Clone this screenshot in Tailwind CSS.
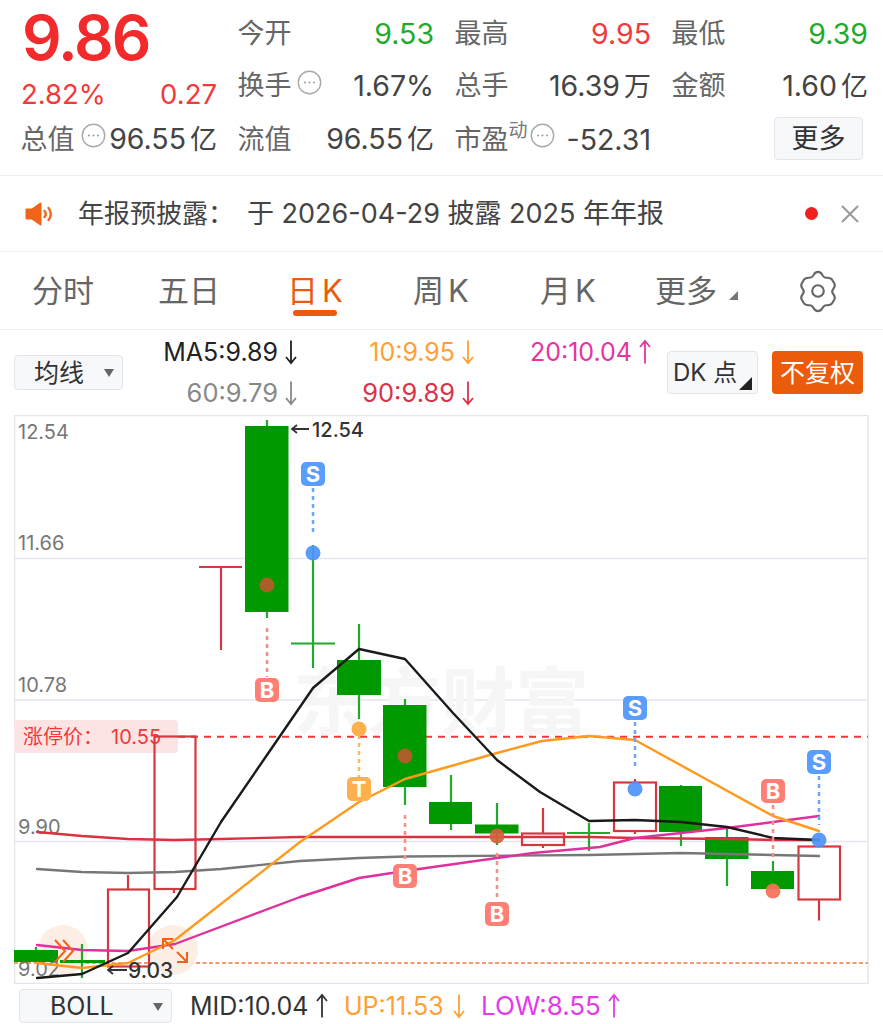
<!DOCTYPE html>
<html lang="zh">
<head>
<meta charset="utf-8">
<script src="https://cdn.jsdelivr.net/npm/@tailwindcss/browser@4"></script>
<title>K</title>
</head>
<body class="bg-white font-['Inter','Noto_Sans_CJK_SC',sans-serif] text-[#444]">
<div class="w-[883px] h-[1024px] overflow-hidden flex flex-col">

  <!-- quote header -->
  <section class="h-[176px] border-b border-[#eeeeee] pl-[21px] grid grid-cols-[196px_195px_195px_195px] gap-x-[22px] grid-rows-[60px_52px_55px] text-[28.5px] leading-[34px]">
    <div class="pt-[8px] pl-[1px] text-[62px] leading-[60px] font-semibold text-[#f32a2c] tracking-[-2px]">9.86</div>
    <div class="flex items-center justify-between pt-[7px]"><span class="text-[27px] -ml-[1.5px] text-[#666]">今开</span><span class="text-[#1faa2c]">9.53</span></div>
    <div class="flex items-center justify-between pt-[7px]"><span class="text-[27px] -ml-[1.5px] text-[#666]">最高</span><span class="text-[#f33a3c]">9.95</span></div>
    <div class="flex items-center justify-between pt-[7px]"><span class="text-[27px] -ml-[1.5px] text-[#666]">最低</span><span class="text-[#1faa2c]">9.39</span></div>

    <div class="flex items-center justify-between pl-[1px] pt-[16px] text-[27.5px] text-[#f3393b]"><span class="-ml-[1px]">2.82%</span><span>0.27</span></div>
    <div class="flex items-center"><span class="text-[27px] -ml-[1.5px] text-[#666]">换手</span>
      <svg class="ml-[5px] -mt-[8px] w-[25px] h-[25px]" viewBox="0 0 25 25"><circle cx="12.500" cy="12.500" r="11.200" fill="none" stroke="#aaa" stroke-width="1.400"/><circle cx="8" cy="12.500" r="1" fill="#999"/><circle cx="12.500" cy="12.500" r="1" fill="#999"/><circle cx="17" cy="12.500" r="1" fill="#999"/></svg>
      <span class="ml-auto">1.67%</span></div>
    <div class="flex items-center justify-between"><span class="text-[27px] -ml-[1.5px] text-[#666]">总手</span><span>16.39<span class="text-[27px] ml-[4px]">万</span></span></div>
    <div class="flex items-center justify-between"><span class="text-[27px] -ml-[1.5px] text-[#666]">金额</span><span>1.60<span class="text-[27px] ml-[4px]">亿</span></span></div>

    <div class="flex items-center pl-[1px]"><span class="text-[27px] -ml-[1.5px] text-[#666]">总值</span>
      <svg class="ml-[6px] -mt-[9px] w-[25px] h-[25px] shrink-0" viewBox="0 0 25 25"><circle cx="12.500" cy="12.500" r="11.200" fill="none" stroke="#aaa" stroke-width="1.400"/><circle cx="8" cy="12.500" r="1" fill="#999"/><circle cx="12.500" cy="12.500" r="1" fill="#999"/><circle cx="17" cy="12.500" r="1" fill="#999"/></svg>
      <span class="ml-auto">96.55<span class="text-[27px] ml-[4px]">亿</span></span></div>
    <div class="flex items-center justify-between"><span class="text-[27px] -ml-[1.5px] text-[#666]">流值</span><span>96.55<span class="text-[27px] ml-[4px]">亿</span></span></div>
    <div class="flex items-center"><span class="text-[27px] -ml-[1.5px] text-[#666]">市盈</span><span class="text-[19px] leading-[18px] text-[#777] -mt-[18px]">动</span>
      <svg class="ml-[2px] -mt-[9px] w-[25px] h-[25px] shrink-0" viewBox="0 0 25 25"><circle cx="12.500" cy="12.500" r="11.200" fill="none" stroke="#aaa" stroke-width="1.400"/><circle cx="8" cy="12.500" r="1" fill="#999"/><circle cx="12.500" cy="12.500" r="1" fill="#999"/><circle cx="17" cy="12.500" r="1" fill="#999"/></svg>
      <span class="ml-auto">-52.31</span></div>
    <div class="flex items-center justify-end pr-[5px] pb-[2px]"><span class="w-[89px] h-[43px] rounded-[4px] border border-[#e3e5ea] bg-[#f7f8fa] flex items-center justify-center text-[27px] text-[#333]">更多</span></div>
  </section>

  <!-- notice -->
  <section class="h-[76px] border-b border-[#eeeeee] flex items-center pl-[25px] text-[26px] text-[#444]">
    <svg class="w-[28px] h-[26px] shrink-0" viewBox="0 0 28 26"><path d="M1.500 8.500h5.500L15.500 2.500v21L7 17.500H1.500z" fill="#f0641a" stroke="#f0641a" stroke-width="2" stroke-linejoin="round"/><path d="M19.500 10a4.500 4.500 0 0 1 0 6M23.500 7a9 9 0 0 1 0 12" fill="none" stroke="#f0641a" stroke-width="2.400" stroke-linecap="round"/></svg>
    <span class="ml-[25px] mt-[2px] whitespace-nowrap">年报预披露：<span class="ml-[13px] text-[27px]">于 2026-04-29 披露 2025 年年报</span></span>
    <span class="ml-auto w-[13px] h-[13px] rounded-full bg-[#f21d1d]"></span>
    <svg class="ml-[22px] mr-[23px] w-[20px] h-[20px]" viewBox="0 0 20 20"><path d="M2 2l16 16M18 2L2 18" stroke="#999" stroke-width="2" fill="none"/></svg>
  </section>

  <!-- tabs -->
  <nav class="relative h-[78px] border-b border-[#eeeeee] flex items-center text-[31px] text-[#666] pt-[2px]">
    <span class="ml-[32px] w-[126px]">分时</span>
    <span class="w-[132px]">五日</span>
    <span class="relative w-[123px] -ml-[3px] mr-[3px] text-[#ea5b0c]">日<span class="ml-[4px]">K</span><span class="absolute left-[6px] top-[42px] w-[44px] h-[6px] rounded-full bg-[#ea5b0c]"></span></span>
    <span class="w-[127px]">周<span class="ml-[4px]">K</span></span>
    <span class="w-[115px]">月<span class="ml-[4px]">K</span></span>
    <span class="relative w-[141px]">更多<span class="absolute left-[74px] top-[23px] w-0 h-0 border-l-[9px] border-l-transparent border-b-[9px] border-b-[#777]"></span></span>
    <svg class="w-[44px] h-[44px] -mt-[2px]" viewBox="0 0 38 38"><path d="M19 2.500c1.800 0 3 1 4 3 .8 1.500 2 2.200 3.600 2.100 2.300-.1 3.800.3 4.700 1.900l1.800 3.100c.9 1.600.5 3-1 4.800-1.100 1.300-1.100 2.800 0 4.200 1.500 1.800 1.900 3.200 1 4.800l-1.800 3c-.9 1.600-2.400 2-4.700 1.900-1.600-.1-2.800.6-3.600 2.100-1 2-2.200 3-4 3s-3-1-4-3c-.8-1.500-2-2.200-3.600-2.100-2.300.1-3.800-.3-4.700-1.900l-1.800-3c-.9-1.600-.5-3 1-4.800 1.100-1.400 1.100-2.900 0-4.200-1.500-1.800-1.900-3.200-1-4.800l1.800-3.100c.9-1.600 2.400-2 4.700-1.900 1.600.1 2.800-.6 3.600-2.100 1-2 2.200-3 4-3z" fill="none" stroke="#666" stroke-width="1.800"/><circle cx="19" cy="19" r="5" fill="none" stroke="#666" stroke-width="1.800"/></svg>
  </nav>

  <!-- indicator row -->
  <section class="relative h-[85px] text-[25px] leading-[30px]">
    <span class="absolute left-[14px] top-[25px] w-[109px] h-[35px] rounded-[4px] border border-[#e3e5ea] bg-[#f7f8fa] flex items-center pl-[19px] text-[#333]">均线<span class="absolute right-[8px] top-[13px] w-0 h-0 border-x-[5px] border-x-transparent border-t-[8px] border-t-[#666]"></span></span>
    <div class="absolute left-[140px] top-[7px] w-[158px] flex items-center justify-end gap-[6px] whitespace-nowrap text-[#222]">MA5:9.89<svg class="w-[14px] h-[26px]" viewBox="0 0 14 26" fill="none" stroke="currentColor" stroke-width="1.800"><path d="M7 1.500V24M2 18l5 6 5-6"/></svg></div>
    <div class="absolute left-[317px] top-[7px] w-[158px] flex items-center justify-end gap-[6px] whitespace-nowrap text-[#ffa033]">10:9.95<svg class="w-[14px] h-[26px]" viewBox="0 0 14 26" fill="none" stroke="currentColor" stroke-width="1.800"><path d="M7 1.500V24M2 18l5 6 5-6"/></svg></div>
    <div class="absolute left-[494px] top-[7px] w-[158px] flex items-center justify-end gap-[6px] whitespace-nowrap text-[#e6349f]">20:10.04<svg class="w-[14px] h-[26px]" viewBox="0 0 14 26" fill="none" stroke="currentColor" stroke-width="1.800"><path d="M7 24.500V2M2 8l5-6 5 6"/></svg></div>
    <div class="absolute left-[140px] top-[48px] w-[158px] flex items-center justify-end gap-[6px] whitespace-nowrap text-[25.500px] text-[#888]">60:9.79<svg class="w-[14px] h-[26px]" viewBox="0 0 14 26" fill="none" stroke="currentColor" stroke-width="1.800"><path d="M7 1.500V24M2 18l5 6 5-6"/></svg></div>
    <div class="absolute left-[317px] top-[48px] w-[158px] flex items-center justify-end gap-[6px] whitespace-nowrap text-[25.500px] text-[#d9334a]">90:9.89<svg class="w-[14px] h-[26px]" viewBox="0 0 14 26" fill="none" stroke="currentColor" stroke-width="1.800"><path d="M7 1.500V24M2 18l5 6 5-6"/></svg></div>
    <span class="absolute left-[667px] top-[21px] w-[91px] h-[43px] rounded-[4px] border border-[#e3e5ea] bg-[#f7f8fa] flex items-center pl-[5px] text-[#333] text-[24px] whitespace-nowrap">DK 点<span class="absolute right-[5px] bottom-[3px] w-0 h-0 border-l-[13px] border-l-transparent border-b-[13px] border-b-[#222]"></span></span>
    <span class="absolute left-[772px] top-[21px] w-[91px] h-[43px] rounded-[4px] bg-[#ea5b0c] flex items-center justify-center text-white">不复权</span>
  </section>

  <!-- chart -->
  <div class="h-[569px] ml-[14px] w-[855px]">
    <svg class="block" width="855" height="569" viewBox="14 415 855 569" font-family="'Inter','Noto Sans CJK SC',sans-serif">
      <rect x="14.500" y="415.500" width="853.500" height="568" fill="#fff" stroke="#e4e6ee" stroke-width="1.500"/>
      <path d="M14 558.500H868M14 700H868M14 841.500H868" stroke="#e4e6f0" stroke-width="1.500"/>

      <text x="293" y="729" font-size="74" font-weight="700" fill="#f6f6f6" font-family="'Noto Sans CJK SC',sans-serif">东方财富</text>

      <rect x="14" y="720" width="164" height="33" rx="4" fill="#fde4e4"/>
      <text x="23" y="744" font-size="20" fill="#f0383a">涨停价：<tspan dx="8">10.55</tspan></text>
      <path d="M178 736.800H868" stroke="#f0383a" stroke-width="2" stroke-dasharray="7 6"/>
      <path d="M14 963H868" stroke="#f29a6a" stroke-width="2" stroke-dasharray="4 2.500"/>

      <circle cx="63" cy="950" r="25" fill="#fdeee5"/>
      <circle cx="173" cy="950" r="25" fill="#fdeee5"/>

      <g font-size="20" fill="#777">
        <text x="18" y="439">12.54</text>
        <text x="18" y="550">11.66</text>
        <text x="18" y="692">10.78</text>
        <text x="18" y="834">9.90</text>
        <text x="18" y="976">9.02</text>
      </g>

      <!-- green candles -->
      <g stroke="#22a82a" stroke-width="2.200" fill="none">
        <path d="M36 947v4M82 944v34M267 420v7M267 611v7M313 545v123M291 643.500h44M359 624v37M359 694v25M405 699v7M405 786v19M451 775v28M451 823v7M497 803v22M497 832v13M589 823v28M567 833h43M681 785v2M681 831v15M727 829v9M727 858v28M773 861v11M773 888v2"/>
      </g>
      <g fill="#009a00">
        <rect x="14" y="950" width="44" height="12"/>
        <rect x="60" y="960" width="45" height="3"/>
        <rect x="245" y="426" width="43.500" height="186"/>
        <rect x="337" y="660" width="44" height="35"/>
        <rect x="383" y="705" width="43.500" height="82"/>
        <rect x="429" y="802" width="43" height="22"/>
        <rect x="475" y="824.500" width="43.500" height="9"/>
        <rect x="659" y="786" width="43" height="46"/>
        <rect x="705" y="837" width="43.500" height="22"/>
        <rect x="751" y="871" width="43" height="18"/>
      </g>
      <!-- red candles -->
      <g stroke="#d5393f" stroke-width="2.200" fill="none">
        <path d="M128 875v14M174 889v4M221 567v83M199 567h43M543 808v25M543 845v3M635 779v3M635 831v3M819 899.500v21"/>
        <rect x="108" y="889.500" width="41" height="77"/>
        <rect x="154.500" y="736.500" width="41" height="152.500"/>
        <rect x="522" y="833.500" width="42" height="11.500"/>
        <rect x="614" y="782.500" width="42" height="48.500"/>
        <rect x="798.500" y="846.500" width="41.500" height="53"/>
      </g>

      <!-- averages -->
      <g fill="none" stroke-width="2.400" stroke-linejoin="round" stroke-linecap="round">
        <polyline stroke="#d73340" points="37,832 82,836 128,839 175,840 221,839 300,837 405,837 497,837 589,837 635,838 727,839 773,840 819,840"/>
        <polyline stroke="#777" points="37,869 82,872 128,873 175,872 221,869 300,861 359,858 405,856.500 589,855 635,854 681,853 727,854 773,855 819,856"/>
        <polyline stroke="#e0309c" points="37,945 82,950 128,951 175,944 300,897 359,878 405,871 497,858 533,853 600,847 635,838 727,828 773,822 819,816"/>
        <polyline stroke="#ff9a1f" points="37,963 82,968 128,963 175,940 300,842 359,802 405,779 451,766 497,753 542,741 589,736 635,740 773,816 819,831"/>
        <polyline stroke="#1a1a1a" points="37,978 82,974 128,953 177,897 221,822 267,755 313,688 359,649 405,659 453,713 497,760 540,792 589,821 635,820 681,822 727,827 773,838 819,840"/>
      </g>

      <!-- turning-point arrows -->
      <g fill="none" stroke="#f0641a" stroke-width="2">
        <path d="M55 940l10 11-10 11M63 940l10 11-10 11"/>
        <path d="M163 949v-10h10M163 939l10 10M187 952v10h-10M187 962l-10-10"/>
      </g>

      <path d="M292 429h17M297 425l-5 4 5 4" fill="none" stroke="#333" stroke-width="1.800"/>
      <text x="312" y="437" font-size="20" font-weight="500" fill="#333">12.54</text>
      <path d="M108 970h19M113 966l-5 4 5 4" fill="none" stroke="#333" stroke-width="1.800"/>
      <text x="128" y="978" font-size="21" font-weight="500" fill="#333">9.03</text>

      <!-- trade marks -->
      <g fill="none" stroke-width="2.500" stroke-dasharray="4 4">
        <path stroke="#6aa6fb" d="M313 488v47M635 722v48M819 776v49"/>
        <path stroke="#fe8c84" d="M267 628v49M405 815v47M497 853v47M773 805v55"/>
        <path stroke="#ffb860" d="M359 735v42"/>
      </g>
      <g fill-opacity="0.92">
        <circle cx="313" cy="553" r="7.500" fill="#4d93fb"/>
        <circle cx="635" cy="789" r="7.500" fill="#4d93fb"/>
        <circle cx="819" cy="840" r="7.500" fill="#4d93fb"/>
        <circle cx="267" cy="585" r="7.500" fill="#b85a2a"/>
        <circle cx="405" cy="756" r="7.500" fill="#b85a2a"/>
        <circle cx="497" cy="836" r="7.500" fill="#d2603c"/>
        <circle cx="773" cy="891" r="7.500" fill="#fa7058"/>
        <circle cx="359" cy="729" r="7.500" fill="#ffa93d"/>
      </g>

      <g font-size="22" font-weight="700" fill="#fff" text-anchor="middle">
        <rect x="301" y="462" width="24" height="24" rx="5" fill="#5b9dfb"/><text x="313" y="482">S</text>
        <rect x="623" y="696" width="24" height="24" rx="5" fill="#5b9dfb"/><text x="635" y="716">S</text>
        <rect x="807" y="750" width="24" height="24" rx="5" fill="#5b9dfb"/><text x="819" y="770">S</text>
        <rect x="255" y="678" width="24" height="24" rx="5" fill="#fe7f76"/><text x="267" y="698">B</text>
        <rect x="393" y="864" width="24" height="24" rx="5" fill="#fe7f76"/><text x="405" y="884">B</text>
        <rect x="485" y="902" width="24" height="24" rx="5" fill="#fe7f76"/><text x="497" y="922">B</text>
        <rect x="761" y="779" width="24" height="24" rx="5" fill="#fe7f76"/><text x="773" y="799">B</text>
        <rect x="347" y="777" width="24" height="24" rx="5" fill="#ffb04d"/><text x="359" y="797">T</text>
      </g>
    </svg>
  </div>

  <!-- bottom indicator row -->
  <section class="relative flex-1 text-[25px] leading-[30px]">
    <span class="absolute left-[19px] top-[5px] w-[153px] h-[34px] rounded-[4px] border border-[#e3e5ea] bg-[#f7f8fa] flex items-center pl-[30px] text-[#333]">BOLL<span class="absolute right-[8px] top-[13px] w-0 h-0 border-x-[5px] border-x-transparent border-t-[8px] border-t-[#666]"></span></span>
    <span class="absolute left-[190px] top-[7px] flex items-center gap-[7px] whitespace-nowrap text-[#333]">MID:10.04<svg class="w-[14px] h-[26px]" viewBox="0 0 14 26" fill="none" stroke="currentColor" stroke-width="1.800"><path d="M7 24.500V2M2 8l5-6 5 6"/></svg></span>
    <span class="absolute left-[344px] top-[7px] flex items-center gap-[8px] whitespace-nowrap text-[#ffa033]">UP:11.53<svg class="w-[14px] h-[26px]" viewBox="0 0 14 26" fill="none" stroke="currentColor" stroke-width="1.800"><path d="M7 1.500V24M2 18l5 6 5-6"/></svg></span>
    <span class="absolute left-[481px] top-[7px] flex items-center gap-[6px] whitespace-nowrap text-[26px] text-[#e23be8]">LOW:8.55<svg class="w-[14px] h-[26px]" viewBox="0 0 14 26" fill="none" stroke="currentColor" stroke-width="1.800"><path d="M7 24.500V2M2 8l5-6 5 6"/></svg></span>
  </section>
</div>
</body>
</html>
